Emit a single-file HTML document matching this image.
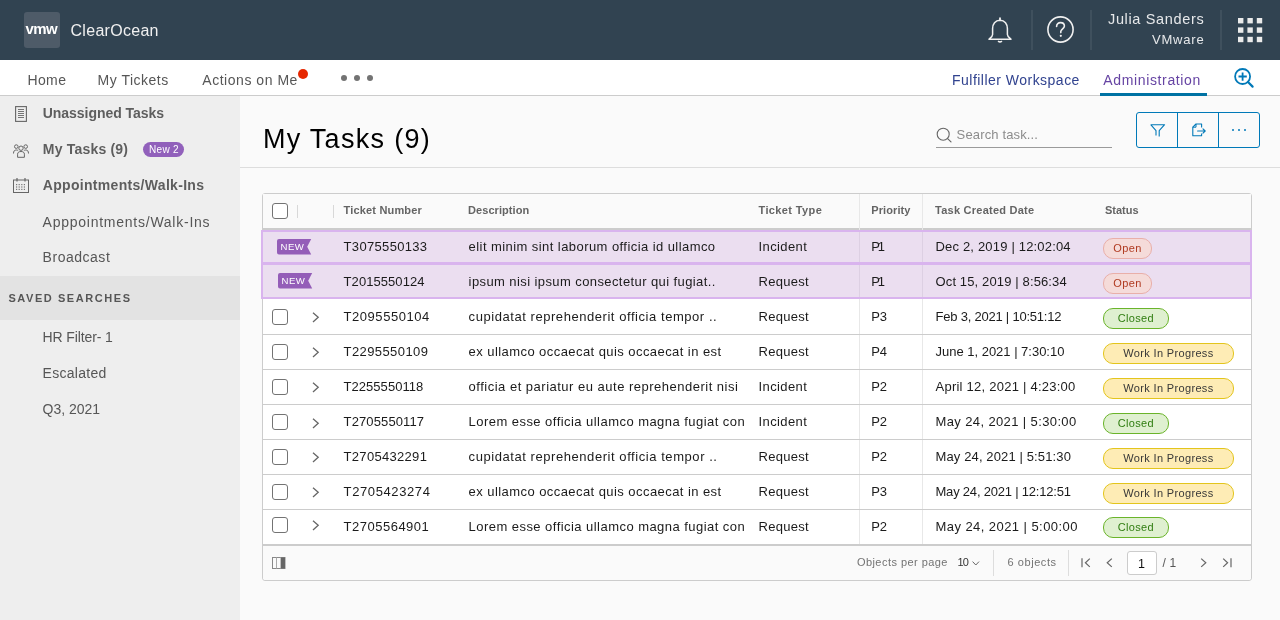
<!DOCTYPE html>
<html><head><meta charset="utf-8">
<style>
html,body{margin:0;padding:0;width:1280px;height:620px;overflow:hidden;background:#fafafa;font-family:"Liberation Sans",sans-serif;}
.a{position:absolute;box-sizing:border-box;}
.t{position:absolute;white-space:pre;line-height:20px;height:20px;font-family:"Liberation Sans",sans-serif;}
body{will-change:transform;}
svg{position:absolute;overflow:visible;}
</style></head><body>
<!-- header -->
<div class="a" style="left:0;top:0;width:1280px;height:60px;background:#314351"></div>
<div class="a" style="left:24px;top:12px;width:36px;height:36px;background:#4e5b68;border-radius:3px"></div>
<div class="t" style="left:25.5px;top:19px;font-size:15px;font-weight:700;color:#fff;letter-spacing:-0.6px">vmw</div>
<!-- bell -->
<svg style="left:988px;top:17.8px" width="24" height="26" viewBox="0 0 24 26">
  <path d="M12 2.2 C7.2 2.2 4.6 6 4.6 10.5 L4.6 16.5 C4.6 18.5 2.2 20 1 21.2 L23 21.2 C21.8 20 19.4 18.5 19.4 16.5 L19.4 10.5 C19.4 6 16.8 2.2 12 2.2 Z" fill="none" stroke="#f0f0f0" stroke-width="1.5" stroke-linejoin="round"/>
  <path d="M12 0.2 L12 2.4" stroke="#f0f0f0" stroke-width="1.8" stroke-linecap="round"/>
  <path d="M10 23 Q12 25.2 14 23" fill="#f0f0f0" stroke="#f0f0f0" stroke-width="1.2"/>
</svg>
<div class="a" style="left:1030.5px;top:10px;width:2px;height:40px;background:#3f505d"></div>
<!-- help -->
<svg style="left:1047px;top:16px" width="27" height="27" viewBox="0 0 27 27">
  <circle cx="13.5" cy="13.5" r="12.6" fill="none" stroke="#f0f0f0" stroke-width="1.6"/>
  <path d="M9.6 10.4 C9.6 8 11.4 6.6 13.5 6.6 C15.7 6.6 17.4 8 17.4 10.1 C17.4 12.6 13.8 13 13.8 15.6 L13.8 16.6" fill="none" stroke="#f0f0f0" stroke-width="1.6" stroke-linecap="round"/>
  <circle cx="13.8" cy="19.8" r="1.1" fill="#f0f0f0"/>
</svg>
<div class="a" style="left:1089.5px;top:10px;width:2px;height:40px;background:#3f505d"></div>
<div class="a" style="left:1219.8px;top:10px;width:2px;height:40px;background:#3f505d"></div>
<!-- grid -->
<svg style="left:1238px;top:18.1px" width="25" height="25" viewBox="0 0 25 25" fill="#ebebeb"><rect x="0.0" y="0.0" width="5.4" height="5.4"/><rect x="9.4" y="0.0" width="5.4" height="5.4"/><rect x="18.8" y="0.0" width="5.4" height="5.4"/><rect x="0.0" y="9.4" width="5.4" height="5.4"/><rect x="9.4" y="9.4" width="5.4" height="5.4"/><rect x="18.8" y="9.4" width="5.4" height="5.4"/><rect x="0.0" y="18.8" width="5.4" height="5.4"/><rect x="9.4" y="18.8" width="5.4" height="5.4"/><rect x="18.8" y="18.8" width="5.4" height="5.4"/></svg>

<!-- subnav -->
<div class="a" style="left:0;top:60px;width:1280px;height:36px;background:#fff;border-bottom:1px solid #cccccc"></div>
<div class="a" style="left:298px;top:69px;width:10px;height:10px;border-radius:50%;background:#e62700"></div>
<div class="a" style="left:341px;top:75px;width:6px;height:6px;border-radius:50%;background:#737373"></div>
<div class="a" style="left:354px;top:75px;width:6px;height:6px;border-radius:50%;background:#737373"></div>
<div class="a" style="left:367px;top:75px;width:6px;height:6px;border-radius:50%;background:#737373"></div>
<div class="a" style="left:1100px;top:93px;width:107px;height:3px;background:#0072a3"></div>
<!-- zoom icon -->
<svg style="left:1234px;top:68px" width="20" height="20" viewBox="0 0 20 20">
  <circle cx="8.6" cy="8.5" r="7.5" fill="none" stroke="#0079b8" stroke-width="1.8"/>
  <path d="M8.6 4.4 V12.7 M4.5 8.5 H12.8" stroke="#0079b8" stroke-width="1.8"/>
  <path d="M14 14 L18.6 18.6" stroke="#0079b8" stroke-width="2.2" stroke-linecap="round"/>
</svg>

<!-- sidebar -->
<div class="a" style="left:0;top:96px;width:240px;height:524px;background:#eeeeee"></div>
<div class="a" style="left:0;top:276px;width:240px;height:44px;background:#e3e3e3"></div>
<!-- doc icon -->
<svg style="left:15px;top:106px" width="12" height="16" viewBox="0 0 12 16">
  <rect x="0.6" y="0.6" width="10.8" height="14.8" fill="none" stroke="#666" stroke-width="1.1"/>
  <path d="M3 3.5 H9 M3 5.5 H9 M3 7.5 H9 M3 9.5 H9 M3 11.5 H9" stroke="#666" stroke-width="0.9"/>
</svg>
<!-- people icon -->
<svg style="left:13px;top:143.5px" width="16" height="14" viewBox="0 0 16 14">
  <circle cx="8" cy="4.2" r="2.2" fill="none" stroke="#666" stroke-width="1"/>
  <circle cx="3.3" cy="2.6" r="1.8" fill="none" stroke="#666" stroke-width="1"/>
  <circle cx="12.7" cy="2.6" r="1.8" fill="none" stroke="#666" stroke-width="1"/>
  <path d="M4.6 13.3 V10.2 C4.6 8.4 6 7.5 8 7.5 C10 7.5 11.4 8.4 11.4 10.2 V13.3 Z" fill="none" stroke="#666" stroke-width="1"/>
  <path d="M0.5 9.5 C0.5 7 1.6 6 3.3 6 C4.2 6 4.8 6.3 5.2 6.8 M15.5 9.5 C15.5 7 14.4 6 12.7 6 C11.8 6 11.2 6.3 10.8 6.8" fill="none" stroke="#666" stroke-width="1"/>
</svg>
<!-- calendar icon -->
<svg style="left:13px;top:178px" width="16" height="15" viewBox="0 0 16 15">
  <rect x="0.5" y="2" width="15" height="12.5" fill="none" stroke="#666" stroke-width="1"/>
  <path d="M4 0 V3.5 M12 0 V3.5" stroke="#666" stroke-width="1.2"/>
  <g fill="#777"><rect x="3" y="6" width="1.2" height="1.2"/><rect x="5.6" y="6" width="1.2" height="1.2"/><rect x="8.2" y="6" width="1.2" height="1.2"/><rect x="10.8" y="6" width="1.2" height="1.2"/>
  <rect x="3" y="8.4" width="1.2" height="1.2"/><rect x="5.6" y="8.4" width="1.2" height="1.2"/><rect x="8.2" y="8.4" width="1.2" height="1.2"/><rect x="10.8" y="8.4" width="1.2" height="1.2"/>
  <rect x="3" y="10.8" width="1.2" height="1.2"/><rect x="5.6" y="10.8" width="1.2" height="1.2"/><rect x="8.2" y="10.8" width="1.2" height="1.2"/><rect x="10.8" y="10.8" width="1.2" height="1.2"/></g>
</svg>
<div class="a" style="left:143px;top:142px;width:41px;height:15px;border-radius:8px;background:#9160bb"></div>

<!-- content -->
<div class="a" style="left:240px;top:167px;width:1040px;height:1px;background:#dddddd"></div>
<!-- search -->
<svg style="left:936px;top:128px" width="16" height="15" viewBox="0 0 16 15">
  <circle cx="7.2" cy="6.2" r="6" fill="none" stroke="#666" stroke-width="1.1"/>
  <path d="M11.6 10.6 L15 13.9" stroke="#666" stroke-width="1.2" stroke-linecap="round"/>
</svg>
<div class="a" style="left:936px;top:147px;width:176px;height:1px;background:#9a9a9a"></div>
<!-- buttons -->
<div class="a" style="left:1136px;top:112px;width:124px;height:36px;border:1px solid #0079b8;border-radius:3px"></div>
<div class="a" style="left:1177px;top:112px;width:1px;height:36px;background:#0079b8"></div>
<div class="a" style="left:1218px;top:112px;width:1px;height:36px;background:#0079b8"></div>
<svg style="left:1149.5px;top:123.8px" width="16" height="14" viewBox="0 0 16 14">
  <path d="M0.7 0.7 H14.6 L9.2 6.6 V12.6 M0.7 0.7 L6 6.6 V11.6" fill="none" stroke="#0079b8" stroke-width="1.1" stroke-linejoin="round"/>
</svg>
<svg style="left:1191.5px;top:123px" width="15" height="14" viewBox="0 0 15 14">
  <path d="M9.6 4.5 V1 H4 L0.8 4.2 V12.8 H9.6 V10.5" fill="none" stroke="#0079b8" stroke-width="1.1" stroke-linejoin="round"/>
  <path d="M0.8 4.2 H4 V1" fill="none" stroke="#0079b8" stroke-width="1"/>
  <path d="M5.6 8 H13.2 M11 5.8 L13.2 8 L11 10.2" fill="none" stroke="#0079b8" stroke-width="1.1" stroke-linecap="round" stroke-linejoin="round"/>
</svg>
<div class="a" style="left:1231.5px;top:128.7px;width:2.7px;height:2.7px;border-radius:50%;background:#0079b8"></div>
<div class="a" style="left:1237.5px;top:128.7px;width:2.7px;height:2.7px;border-radius:50%;background:#0079b8"></div>
<div class="a" style="left:1243.5px;top:128.7px;width:2.7px;height:2.7px;border-radius:50%;background:#0079b8"></div>

<!-- table -->
<div class="a" style="left:262px;top:193px;width:990px;height:388px;border:1px solid #cccccc;border-radius:3px;background:#ffffff;overflow:hidden">
</div>
<div class="a" style="left:263px;top:194px;width:988px;height:34px;background:#fafafa"></div>
<div class="a" style="left:263px;top:228px;width:988px;height:2px;background:#cccccc"></div>
<div class="a" style="left:263px;top:545px;width:988px;height:35px;background:#fafafa;border-radius:0 0 3px 3px"></div>
<div class="a" style="left:263px;top:544px;width:988px;height:2px;background:#cccccc"></div>
<!-- column lines -->
<div class="a" style="left:859px;top:194px;width:1px;height:350px;background:#e8e8e8"></div>
<div class="a" style="left:922px;top:194px;width:1px;height:350px;background:#e8e8e8"></div>
<div class="a" style="left:297px;top:205px;width:1px;height:13px;background:#d8d8d8"></div>
<div class="a" style="left:333px;top:205px;width:1px;height:13px;background:#d8d8d8"></div>
<!-- row borders -->
<div class="a" style="left:263px;top:334px;width:988px;height:1px;background:#cccccc"></div>
<div class="a" style="left:263px;top:369px;width:988px;height:1px;background:#cccccc"></div>
<div class="a" style="left:263px;top:404px;width:988px;height:1px;background:#cccccc"></div>
<div class="a" style="left:263px;top:439px;width:988px;height:1px;background:#cccccc"></div>
<div class="a" style="left:263px;top:474px;width:988px;height:1px;background:#cccccc"></div>
<div class="a" style="left:263px;top:509px;width:988px;height:1px;background:#cccccc"></div>
<!-- purple rows -->
<div class="a" style="left:261px;top:230px;width:991px;height:34px;background:#ebdef0;border:2px solid #d9b4ee"></div>
<div class="a" style="left:261px;top:262px;width:991px;height:37px;background:#ebdef0;border:2px solid #d9b4ee;border-top-width:3px"></div>
<div class="a" style="left:859px;top:232px;width:1px;height:30px;background:#ddd0e3"></div>
<div class="a" style="left:922px;top:232px;width:1px;height:30px;background:#ddd0e3"></div>
<div class="a" style="left:859px;top:265px;width:1px;height:32px;background:#ddd0e3"></div>
<div class="a" style="left:922px;top:265px;width:1px;height:32px;background:#ddd0e3"></div>
<!-- NEW badges -->
<svg style="left:277px;top:239.3px" width="35" height="16" viewBox="0 0 35 16">
  <path d="M2 0 H34.2 L30.2 7.7 L34.2 15.5 H2 Q0 15.5 0 13.5 V2 Q0 0 2 0 Z" fill="#945db8"/>
  <text x="15.5" y="11.4" text-anchor="middle" font-family="Liberation Sans" font-size="9.6" font-weight="400" fill="#fff" letter-spacing="0.5">NEW</text>
</svg>
<svg style="left:278px;top:273px" width="35" height="16" viewBox="0 0 35 16">
  <path d="M2 0 H34.2 L30.2 7.7 L34.2 15.5 H2 Q0 15.5 0 13.5 V2 Q0 0 2 0 Z" fill="#945db8"/>
  <text x="15.5" y="11.4" text-anchor="middle" font-family="Liberation Sans" font-size="9.6" font-weight="400" fill="#fff" letter-spacing="0.5">NEW</text>
</svg>
<!-- checkboxes -->
<div class='a' style='left:272px;top:203px;width:16px;height:16px;border:1px solid #737373;border-radius:3px;background:#fff'></div>
<div class='a' style='left:272px;top:309px;width:16px;height:16px;border:1px solid #737373;border-radius:3px;background:#fff'></div>
<svg style='left:312px;top:312.2px' width='8' height='11' viewBox='0 0 8 11'><path d='M1 0.7 L6.2 5.2 L1 9.9' fill='none' stroke='#666' stroke-width='1.3'/></svg>
<div class='a' style='left:272px;top:344px;width:16px;height:16px;border:1px solid #737373;border-radius:3px;background:#fff'></div>
<svg style='left:312px;top:347.2px' width='8' height='11' viewBox='0 0 8 11'><path d='M1 0.7 L6.2 5.2 L1 9.9' fill='none' stroke='#666' stroke-width='1.3'/></svg>
<div class='a' style='left:272px;top:379px;width:16px;height:16px;border:1px solid #737373;border-radius:3px;background:#fff'></div>
<svg style='left:312px;top:382.2px' width='8' height='11' viewBox='0 0 8 11'><path d='M1 0.7 L6.2 5.2 L1 9.9' fill='none' stroke='#666' stroke-width='1.3'/></svg>
<div class='a' style='left:272px;top:414px;width:16px;height:16px;border:1px solid #737373;border-radius:3px;background:#fff'></div>
<svg style='left:312px;top:417.5px' width='8' height='11' viewBox='0 0 8 11'><path d='M1 0.7 L6.2 5.2 L1 9.9' fill='none' stroke='#666' stroke-width='1.3'/></svg>
<div class='a' style='left:272px;top:449px;width:16px;height:16px;border:1px solid #737373;border-radius:3px;background:#fff'></div>
<svg style='left:312px;top:452.1px' width='8' height='11' viewBox='0 0 8 11'><path d='M1 0.7 L6.2 5.2 L1 9.9' fill='none' stroke='#666' stroke-width='1.3'/></svg>
<div class='a' style='left:272px;top:484px;width:16px;height:16px;border:1px solid #737373;border-radius:3px;background:#fff'></div>
<svg style='left:312px;top:486.7px' width='8' height='11' viewBox='0 0 8 11'><path d='M1 0.7 L6.2 5.2 L1 9.9' fill='none' stroke='#666' stroke-width='1.3'/></svg>
<div class='a' style='left:272px;top:517px;width:16px;height:16px;border:1px solid #737373;border-radius:3px;background:#fff'></div>
<svg style='left:312px;top:520.4px' width='8' height='11' viewBox='0 0 8 11'><path d='M1 0.7 L6.2 5.2 L1 9.9' fill='none' stroke='#666' stroke-width='1.3'/></svg>
<!-- status -->
<div class='a' style='left:1103px;top:238.4px;width:49px;height:20.5px;background:#f5dbd9;border:1px solid #e9afa9;border-radius:10px;color:#b03a20;font-size:11px;letter-spacing:0.35px;text-align:center;line-height:18.5px;white-space:pre'>Open</div>
<div class='a' style='left:1103px;top:273.4px;width:49px;height:20.5px;background:#f5dbd9;border:1px solid #e9afa9;border-radius:10px;color:#b03a20;font-size:11px;letter-spacing:0.35px;text-align:center;line-height:18.5px;white-space:pre'>Open</div>
<div class='a' style='left:1103px;top:308.4px;width:65.6px;height:20.5px;background:#dff0d0;border:1px solid #6ab42a;border-radius:10px;color:#2f7d10;font-size:11px;letter-spacing:0.35px;text-align:center;line-height:18.5px;white-space:pre'>Closed</div>
<div class='a' style='left:1103px;top:343.4px;width:130.8px;height:20.5px;background:#feecb5;border:1px solid #e3c51c;border-radius:10px;color:#383838;font-size:11px;letter-spacing:0.35px;text-align:center;line-height:18.5px;white-space:pre'>Work In Progress</div>
<div class='a' style='left:1103px;top:378.4px;width:130.8px;height:20.5px;background:#feecb5;border:1px solid #e3c51c;border-radius:10px;color:#383838;font-size:11px;letter-spacing:0.35px;text-align:center;line-height:18.5px;white-space:pre'>Work In Progress</div>
<div class='a' style='left:1103px;top:413.4px;width:65.6px;height:20.5px;background:#dff0d0;border:1px solid #6ab42a;border-radius:10px;color:#2f7d10;font-size:11px;letter-spacing:0.35px;text-align:center;line-height:18.5px;white-space:pre'>Closed</div>
<div class='a' style='left:1103px;top:448.4px;width:130.8px;height:20.5px;background:#feecb5;border:1px solid #e3c51c;border-radius:10px;color:#383838;font-size:11px;letter-spacing:0.35px;text-align:center;line-height:18.5px;white-space:pre'>Work In Progress</div>
<div class='a' style='left:1103px;top:483.4px;width:130.8px;height:20.5px;background:#feecb5;border:1px solid #e3c51c;border-radius:10px;color:#383838;font-size:11px;letter-spacing:0.35px;text-align:center;line-height:18.5px;white-space:pre'>Work In Progress</div>
<div class='a' style='left:1103px;top:517.4px;width:65.6px;height:20.5px;background:#dff0d0;border:1px solid #6ab42a;border-radius:10px;color:#2f7d10;font-size:11px;letter-spacing:0.35px;text-align:center;line-height:18.5px;white-space:pre'>Closed</div>
<!-- footer -->
<svg style="left:272px;top:557px" width="14" height="12" viewBox="0 0 14 12">
  <rect x="0.5" y="0.5" width="12.5" height="11" fill="none" stroke="#888" stroke-width="1"/>
  <path d="M4.5 0.5 V11.5 M8.8 0.5 V11.5" stroke="#aaa" stroke-width="1"/>
  <rect x="9" y="0.5" width="4" height="11" fill="#666"/>
</svg>
<svg style="left:972px;top:561px" width="8" height="5" viewBox="0 0 8 5">
  <path d="M0.6 0.6 L3.8 4 L7 0.6" fill="none" stroke="#666" stroke-width="1"/>
</svg>
<div class="a" style="left:993px;top:550px;width:1px;height:26px;background:#dddddd"></div>
<div class="a" style="left:1068px;top:550px;width:1px;height:26px;background:#dddddd"></div>
<svg style="left:1081px;top:558px" width="10" height="10" viewBox="0 0 10 10">
  <path d="M1 0.3 V9.2 M8.8 0.6 L4.4 4.75 L8.8 8.9" fill="none" stroke="#666" stroke-width="1.2"/>
</svg>
<svg style="left:1106px;top:558px" width="7" height="10" viewBox="0 0 7 10">
  <path d="M5.8 0.6 L1.2 4.75 L5.8 8.9" fill="none" stroke="#666" stroke-width="1.2"/>
</svg>
<div class="a" style="left:1127px;top:551px;width:30px;height:24px;background:#fff;border:1px solid #cccccc;border-radius:3px"></div>
<svg style="left:1200px;top:558px" width="7" height="10" viewBox="0 0 7 10">
  <path d="M1.2 0.6 L5.8 4.75 L1.2 8.9" fill="none" stroke="#666" stroke-width="1.2"/>
</svg>
<svg style="left:1222px;top:558px" width="10" height="10" viewBox="0 0 10 10">
  <path d="M9 0.3 V9.2 M1.2 0.6 L5.6 4.75 L1.2 8.9" fill="none" stroke="#666" stroke-width="1.2"/>
</svg>
<div class='t' style='left:70.50px;top:20.76px;font-size:16px;font-weight:400;color:#f0f0f0;letter-spacing:0.292px;'>ClearOcean</div>
<div class='t' style='left:1108.00px;top:9.18px;font-size:14.5px;font-weight:400;color:#e6e8ea;letter-spacing:0.653px;'>Julia Sanders</div>
<div class='t' style='left:1152.00px;top:29.80px;font-size:13px;font-weight:400;color:#e6e8ea;letter-spacing:0.803px;'>VMware</div>
<div class='t' style='left:27.40px;top:70.15px;font-size:14px;font-weight:400;color:#565656;letter-spacing:0.414px;'>Home</div>
<div class='t' style='left:97.60px;top:70.15px;font-size:14px;font-weight:400;color:#565656;letter-spacing:0.497px;'>My Tickets</div>
<div class='t' style='left:202.30px;top:70.15px;font-size:14px;font-weight:400;color:#565656;letter-spacing:0.532px;'>Actions on Me</div>
<div class='t' style='left:952.00px;top:69.65px;font-size:14px;font-weight:400;color:#31438f;letter-spacing:0.479px;'>Fulfiller Workspace</div>
<div class='t' style='left:1103.30px;top:69.65px;font-size:14px;font-weight:400;color:#6644a3;letter-spacing:0.638px;'>Administration</div>
<div class='t' style='left:42.80px;top:103.25px;font-size:14px;font-weight:700;color:#5e5e5e;letter-spacing:-0.047px;'>Unassigned Tasks</div>
<div class='t' style='left:42.80px;top:138.95px;font-size:14px;font-weight:700;color:#5e5e5e;letter-spacing:0.200px;'>My Tasks (9)</div>
<div class='t' style='left:42.80px;top:174.95px;font-size:14px;font-weight:700;color:#5e5e5e;letter-spacing:0.308px;'>Appointments/Walk-Ins</div>
<div class='t' style='left:42.60px;top:211.85px;font-size:14px;font-weight:400;color:#565656;letter-spacing:0.751px;'>Apppointments/Walk-Ins</div>
<div class='t' style='left:42.60px;top:247.45px;font-size:14px;font-weight:400;color:#565656;letter-spacing:0.519px;'>Broadcast</div>
<div class='t' style='left:8.40px;top:288.09px;font-size:11px;font-weight:700;color:#565656;letter-spacing:1.564px;'>SAVED SEARCHES</div>
<div class='t' style='left:42.60px;top:327.05px;font-size:14px;font-weight:400;color:#565656;letter-spacing:-0.115px;'>HR Filter- 1</div>
<div class='t' style='left:42.60px;top:362.75px;font-size:14px;font-weight:400;color:#565656;letter-spacing:0.277px;'>Escalated</div>
<div class='t' style='left:42.60px;top:398.75px;font-size:14px;font-weight:400;color:#565656;letter-spacing:-0.030px;'>Q3, 2021</div>
<div class='t' style='left:149.05px;top:139.63px;font-size:10px;font-weight:400;color:#ffffff;letter-spacing:0.285px;'>New 2</div>
<div class='t' style='left:262.90px;top:128.74px;font-size:27px;font-weight:400;color:#000000;letter-spacing:1.306px;'>My Tasks (9)</div>
<div class='t' style='left:956.60px;top:124.90px;font-size:13px;font-weight:400;color:#8c8c8c;letter-spacing:0.147px;'>Search task...</div>
<div class='t' style='left:343.60px;top:199.99px;font-size:11px;font-weight:700;color:#646464;letter-spacing:0.165px;'>Ticket Number</div>
<div class='t' style='left:468.00px;top:199.99px;font-size:11px;font-weight:700;color:#646464;letter-spacing:0.068px;'>Description</div>
<div class='t' style='left:758.50px;top:199.99px;font-size:11px;font-weight:700;color:#646464;letter-spacing:0.378px;'>Ticket Type</div>
<div class='t' style='left:871.20px;top:199.99px;font-size:11px;font-weight:700;color:#646464;letter-spacing:0.112px;'>Priority</div>
<div class='t' style='left:935.10px;top:199.99px;font-size:11px;font-weight:700;color:#646464;letter-spacing:0.239px;'>Task Created Date</div>
<div class='t' style='left:1105.00px;top:199.99px;font-size:11px;font-weight:700;color:#646464;letter-spacing:0.000px;'>Status</div>
<div class='t' style='left:343.60px;top:237.10px;font-size:13px;font-weight:400;color:#1b1b1b;letter-spacing:0.325px;'>T3075550133</div>
<div class='t' style='left:468.60px;top:237.10px;font-size:13px;font-weight:400;color:#1b1b1b;letter-spacing:0.432px;'>elit minim sint laborum officia id ullamco</div>
<div class='t' style='left:758.50px;top:237.10px;font-size:13px;font-weight:400;color:#1b1b1b;letter-spacing:0.393px;'>Incident</div>
<div class='t' style='left:871.20px;top:237.10px;font-size:13px;font-weight:400;color:#1b1b1b;letter-spacing:-2.200px;'>P1</div>
<div class='t' style='left:935.50px;top:237.10px;font-size:13px;font-weight:400;color:#1b1b1b;letter-spacing:0.180px;'>Dec 2, 2019 | 12:02:04</div>
<div class='t' style='left:343.60px;top:272.10px;font-size:13px;font-weight:400;color:#1b1b1b;letter-spacing:0.065px;'>T2015550124</div>
<div class='t' style='left:468.60px;top:272.10px;font-size:13px;font-weight:400;color:#1b1b1b;letter-spacing:0.408px;'>ipsum nisi ipsum consectetur qui fugiat..</div>
<div class='t' style='left:758.50px;top:272.10px;font-size:13px;font-weight:400;color:#1b1b1b;letter-spacing:0.296px;'>Request</div>
<div class='t' style='left:871.20px;top:272.10px;font-size:13px;font-weight:400;color:#1b1b1b;letter-spacing:-2.200px;'>P1</div>
<div class='t' style='left:935.50px;top:272.10px;font-size:13px;font-weight:400;color:#1b1b1b;letter-spacing:0.132px;'>Oct 15, 2019 | 8:56:34</div>
<div class='t' style='left:343.60px;top:307.10px;font-size:13px;font-weight:400;color:#1b1b1b;letter-spacing:0.535px;'>T2095550104</div>
<div class='t' style='left:468.60px;top:307.10px;font-size:13px;font-weight:400;color:#1b1b1b;letter-spacing:0.554px;'>cupidatat reprehenderit officia tempor ..</div>
<div class='t' style='left:758.50px;top:307.10px;font-size:13px;font-weight:400;color:#1b1b1b;letter-spacing:0.296px;'>Request</div>
<div class='t' style='left:871.20px;top:307.10px;font-size:13px;font-weight:400;color:#1b1b1b;letter-spacing:0.000px;'>P3</div>
<div class='t' style='left:935.50px;top:307.10px;font-size:13px;font-weight:400;color:#1b1b1b;letter-spacing:-0.219px;'>Feb 3, 2021 | 10:51:12</div>
<div class='t' style='left:343.60px;top:342.10px;font-size:13px;font-weight:400;color:#1b1b1b;letter-spacing:0.405px;'>T2295550109</div>
<div class='t' style='left:468.60px;top:342.10px;font-size:13px;font-weight:400;color:#1b1b1b;letter-spacing:0.434px;'>ex ullamco occaecat quis occaecat in est</div>
<div class='t' style='left:758.50px;top:342.10px;font-size:13px;font-weight:400;color:#1b1b1b;letter-spacing:0.296px;'>Request</div>
<div class='t' style='left:871.20px;top:342.10px;font-size:13px;font-weight:400;color:#1b1b1b;letter-spacing:0.000px;'>P4</div>
<div class='t' style='left:935.50px;top:342.10px;font-size:13px;font-weight:400;color:#1b1b1b;letter-spacing:-0.012px;'>June 1, 2021 | 7:30:10</div>
<div class='t' style='left:343.60px;top:377.10px;font-size:13px;font-weight:400;color:#1b1b1b;letter-spacing:0.032px;'>T2255550118</div>
<div class='t' style='left:468.60px;top:377.10px;font-size:13px;font-weight:400;color:#1b1b1b;letter-spacing:0.497px;'>officia et pariatur eu aute reprehenderit nisi</div>
<div class='t' style='left:758.50px;top:377.10px;font-size:13px;font-weight:400;color:#1b1b1b;letter-spacing:0.393px;'>Incident</div>
<div class='t' style='left:871.20px;top:377.10px;font-size:13px;font-weight:400;color:#1b1b1b;letter-spacing:0.000px;'>P2</div>
<div class='t' style='left:935.50px;top:377.10px;font-size:13px;font-weight:400;color:#1b1b1b;letter-spacing:0.243px;'>April 12, 2021 | 4:23:00</div>
<div class='t' style='left:343.60px;top:412.10px;font-size:13px;font-weight:400;color:#1b1b1b;letter-spacing:0.122px;'>T2705550117</div>
<div class='t' style='left:468.60px;top:412.10px;font-size:13px;font-weight:400;color:#1b1b1b;letter-spacing:0.454px;'>Lorem esse officia ullamco magna fugiat con</div>
<div class='t' style='left:758.50px;top:412.10px;font-size:13px;font-weight:400;color:#1b1b1b;letter-spacing:0.393px;'>Incident</div>
<div class='t' style='left:871.20px;top:412.10px;font-size:13px;font-weight:400;color:#1b1b1b;letter-spacing:0.000px;'>P2</div>
<div class='t' style='left:935.50px;top:412.10px;font-size:13px;font-weight:400;color:#1b1b1b;letter-spacing:0.379px;'>May 24, 2021 | 5:30:00</div>
<div class='t' style='left:343.60px;top:447.10px;font-size:13px;font-weight:400;color:#1b1b1b;letter-spacing:0.305px;'>T2705432291</div>
<div class='t' style='left:468.60px;top:447.10px;font-size:13px;font-weight:400;color:#1b1b1b;letter-spacing:0.561px;'>cupidatat reprehenderit officia tempor ..</div>
<div class='t' style='left:758.50px;top:447.10px;font-size:13px;font-weight:400;color:#1b1b1b;letter-spacing:0.296px;'>Request</div>
<div class='t' style='left:871.20px;top:447.10px;font-size:13px;font-weight:400;color:#1b1b1b;letter-spacing:0.000px;'>P2</div>
<div class='t' style='left:935.50px;top:447.10px;font-size:13px;font-weight:400;color:#1b1b1b;letter-spacing:0.126px;'>May 24, 2021 | 5:51:30</div>
<div class='t' style='left:343.60px;top:482.10px;font-size:13px;font-weight:400;color:#1b1b1b;letter-spacing:0.605px;'>T2705423274</div>
<div class='t' style='left:468.60px;top:482.10px;font-size:13px;font-weight:400;color:#1b1b1b;letter-spacing:0.436px;'>ex ullamco occaecat quis occaecat in est</div>
<div class='t' style='left:758.50px;top:482.10px;font-size:13px;font-weight:400;color:#1b1b1b;letter-spacing:0.296px;'>Request</div>
<div class='t' style='left:871.20px;top:482.10px;font-size:13px;font-weight:400;color:#1b1b1b;letter-spacing:0.000px;'>P3</div>
<div class='t' style='left:935.50px;top:482.10px;font-size:13px;font-weight:400;color:#1b1b1b;letter-spacing:-0.208px;'>May 24, 2021 | 12:12:51</div>
<div class='t' style='left:343.60px;top:517.10px;font-size:13px;font-weight:400;color:#1b1b1b;letter-spacing:0.495px;'>T2705564901</div>
<div class='t' style='left:468.60px;top:517.10px;font-size:13px;font-weight:400;color:#1b1b1b;letter-spacing:0.454px;'>Lorem esse officia ullamco magna fugiat con</div>
<div class='t' style='left:758.50px;top:517.10px;font-size:13px;font-weight:400;color:#1b1b1b;letter-spacing:0.296px;'>Request</div>
<div class='t' style='left:871.20px;top:517.10px;font-size:13px;font-weight:400;color:#1b1b1b;letter-spacing:0.000px;'>P2</div>
<div class='t' style='left:935.50px;top:517.10px;font-size:13px;font-weight:400;color:#1b1b1b;letter-spacing:0.436px;'>May 24, 2021 | 5:00:00</div>
<div class='t' style='left:856.90px;top:552.19px;font-size:11px;font-weight:400;color:#737373;letter-spacing:0.455px;'>Objects per page</div>
<div class='t' style='left:957.50px;top:552.19px;font-size:11px;font-weight:400;color:#333333;letter-spacing:-0.900px;'>10</div>
<div class='t' style='left:1007.60px;top:552.19px;font-size:11px;font-weight:400;color:#737373;letter-spacing:0.546px;'>6 objects</div>
<div class='t' style='left:1138.12px;top:553.67px;font-size:12.5px;font-weight:400;color:#111111;letter-spacing:0.000px;'>1</div>
<div class='t' style='left:1162.60px;top:553.24px;font-size:12px;font-weight:400;color:#565656;letter-spacing:0.128px;'>/ 1</div>
</body></html>
